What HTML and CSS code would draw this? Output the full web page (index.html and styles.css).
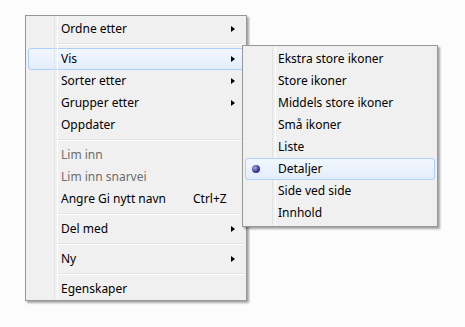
FILE: index.html
```html
<!DOCTYPE html>
<html lang="no">
<head>
    <meta charset="UTF-8">
    <title>Kontekstmeny</title>
    <link rel="stylesheet" href="styles.css">
</head>
<body>
    <div class="desktop">
        <ul class="menu main-menu">
            <li class="item has-sub">Ordne etter</li>
            <li class="sep"></li>
            <li class="item has-sub active">Vis
                <ul class="menu sub-menu">
                    <li class="item">Ekstra store ikoner</li>
                    <li class="item">Store ikoner</li>
                    <li class="item">Middels store ikoner</li>
                    <li class="item">Små ikoner</li>
                    <li class="item">Liste</li>
                    <li class="item active checked">Detaljer</li>
                    <li class="item">Side ved side</li>
                    <li class="item">Innhold</li>
                </ul>
            </li>
            <li class="item has-sub">Sorter etter</li>
            <li class="item has-sub">Grupper etter</li>
            <li class="item">Oppdater</li>
            <li class="sep"></li>
            <li class="item disabled">Lim inn</li>
            <li class="item disabled">Lim inn snarvei</li>
            <li class="item">Angre Gi nytt navn<span class="shortcut">Ctrl+Z</span></li>
            <li class="sep"></li>
            <li class="item has-sub">Del med</li>
            <li class="sep"></li>
            <li class="item has-sub">Ny</li>
            <li class="sep"></li>
            <li class="item">Egenskaper</li>
        </ul>
    </div>
</body>
</html>
```

FILE: styles.css
```css
* {
    margin: 0;
    padding: 0;
    box-sizing: border-box;
}

body {
    background: #fcfcfc;
    font-family: 'Noto Sans', 'Open Sans', sans-serif;
    font-size: 12px;
    color: #000;
    width: 465px;
    height: 327px;
    overflow: hidden;
}

.desktop {
    padding: 15px 0 0 25px;
}

.menu {
    list-style: none;
    background: #f0f0f0;
    border: 1px solid #979797;
    box-shadow: 2px 2px 2px rgba(0, 0, 0, 0.35);
    padding: 2px 2px 0;
}

/* gutter line to the left of the labels */
.menu::before {
    content: "";
    position: absolute;
    top: 1px;
    bottom: 1px;
    left: 28px;
    width: 2px;
    border-left: 1px solid #e2e3e3;
    border-right: 1px solid #fff;
}

.main-menu {
    position: relative;
    width: 222px;
    height: 286px;
}

.sub-menu {
    position: absolute;
    top: 29px;
    left: 216px;
    width: 196px;
    height: 182px;
    padding: 2px;
    z-index: 2;
}

.sub-menu::before {
    left: 29px;
}

.item {
    position: relative;
    height: 22px;
    line-height: 20px;
    padding-left: 32px;
    border: 1px solid transparent;
    border-radius: 3px;
    white-space: nowrap;
}

.item.active {
    border-color: #aecff7;
    background: linear-gradient(#f2f7fe, #e3edfb);
}

.main-menu > .item.active {
    position: static;
}

.disabled {
    color: #6d6d6d;
}

.has-sub::after {
    content: "";
    position: absolute;
    right: 8px;
    top: 7px;
    border-left: 4px solid #000;
    border-top: 3.5px solid transparent;
    border-bottom: 3.5px solid transparent;
}

.main-menu > .has-sub.active::after {
    right: auto;
    left: 205px;
    top: 40px;
}

.shortcut {
    position: absolute;
    left: 164px;
}

.checked::before {
    content: "";
    position: absolute;
    left: 6px;
    top: 6px;
    width: 8px;
    height: 8px;
    border-radius: 50%;
    background: radial-gradient(circle at 35% 35%, #a9a9e6, #3b3b9a 55%, #1e1e66);
}

.sep {
    height: 8px;
    margin-left: 28px;
    padding-top: 3px;
}

.sep::before {
    content: "";
    display: block;
    border-top: 1px solid #e2e3e3;
    border-bottom: 1px solid #fff;
}
```
